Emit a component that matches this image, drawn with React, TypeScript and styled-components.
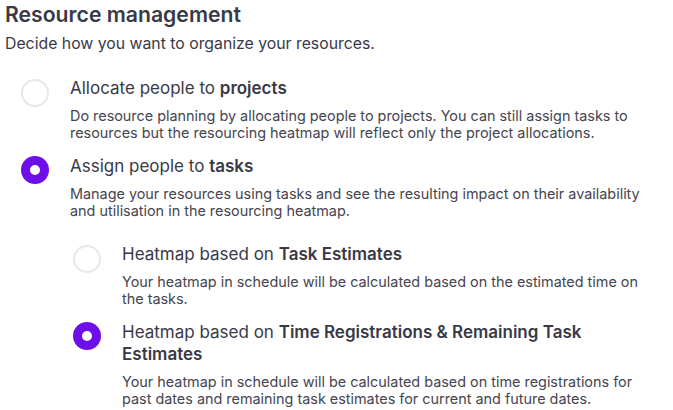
import { FC, ReactNode, useState } from 'react';
import styled, { createGlobalStyle } from 'styled-components';

const GlobalStyle = createGlobalStyle`
  html, body {
    margin: 0;
    padding: 0;
    background: #ffffff;
  }
  body {
    font-family: Inter, 'Noto Sans', sans-serif;
    color: #393946;
    -webkit-font-smoothing: antialiased;
  }
`;

const Page = styled.div`
  padding: 0 5px;
  width: 650px;
`;

const Title = styled.h2`
  margin: 0;
  font-size: 21.2px;
  line-height: 28px;
  font-weight: 600;
  color: #393946;
`;

const Subtitle = styled.p`
  margin: 5px 0 0;
  font-size: 15.8px;
  line-height: 22px;
  color: #393946;
`;

const OptionList = styled.div<{ nested?: boolean }>`
  display: flex;
  flex-direction: column;
  gap: 13.5px;
  padding-left: ${p => (p.nested ? '52px' : '16px')};
  margin-top: ${p => (p.nested ? '24.5px' : '22px')};
`;

const OptionRow = styled.div`
  display: grid;
  grid-template-columns: 28px 1fr;
  column-gap: 21px;
  cursor: pointer;
`;

const Radio = styled.span<{ checked: boolean }>`
  box-sizing: border-box;
  width: 28px;
  height: 28px;
  margin-top: 1.5px;
  border-radius: 50%;
  background: #ffffff;
  border: ${p => (p.checked ? '9px solid #6e0fea' : '2px solid #e8e8e8')};
`;

const OptionText = styled.div<{ maxWidth: number }>`
  display: flex;
  flex-direction: column;
  gap: 8px;
  max-width: ${p => p.maxWidth}px;
`;

const Label = styled.div`
  font-size: 17px;
  line-height: 22px;
  color: #393946;

  b {
    font-weight: 600;
  }
`;

const Description = styled.div`
  font-size: 14.4px;
  line-height: 17px;
  color: #45454f;
`;

interface OptionProps {
  checked: boolean;
  label: ReactNode;
  description: string;
  maxWidth: number;
  onSelect: () => void;
  children?: ReactNode;
}

const Option: FC<OptionProps> = ({ checked, label, description, maxWidth, onSelect, children }) => (
  <div>
    <OptionRow onClick={onSelect}>
      <Radio checked={checked} />
      <OptionText maxWidth={maxWidth}>
        <Label>{label}</Label>
        <Description>{description}</Description>
      </OptionText>
    </OptionRow>
    {children}
  </div>
);

export default function App() {
  const [mode, setMode] = useState<'projects' | 'tasks'>('tasks');
  const [heatmap, setHeatmap] = useState<'estimates' | 'registrations'>('registrations');

  return (
    <Page>
      <GlobalStyle />
      <Title>Resource management</Title>
      <Subtitle>Decide how you want to organize your resources.</Subtitle>
      <OptionList>
        <Option
          checked={mode === 'projects'}
          onSelect={() => setMode('projects')}
          maxWidth={582}
          label={
            <>
              Allocate people to <b>projects</b>
            </>
          }
          description="Do resource planning by allocating people to projects. You can still assign tasks to resources but the resourcing heatmap will reflect only the project allocations."
        />
        <Option
          checked={mode === 'tasks'}
          onSelect={() => setMode('tasks')}
          maxWidth={582}
          label={
            <>
              Assign people to <b>tasks</b>
            </>
          }
          description="Manage your resources using tasks and see the resulting impact on their availability and utilisation in the resourcing heatmap."
        >
          <OptionList nested>
            <Option
              checked={heatmap === 'estimates'}
              onSelect={() => setHeatmap('estimates')}
              maxWidth={528}
              label={
                <>
                  Heatmap based on <b>Task Estimates</b>
                </>
              }
              description="Your heatmap in schedule will be calculated based on the estimated time on the tasks."
            />
            <Option
              checked={heatmap === 'registrations'}
              onSelect={() => setHeatmap('registrations')}
              maxWidth={528}
              label={
                <>
                  Heatmap based on <b>Time Registrations &amp; Remaining Task Estimates</b>
                </>
              }
              description="Your heatmap in schedule will be calculated based on time registrations for past dates and remaining task estimates for current and future dates."
            />
          </OptionList>
        </Option>
      </OptionList>
    </Page>
  );
}
